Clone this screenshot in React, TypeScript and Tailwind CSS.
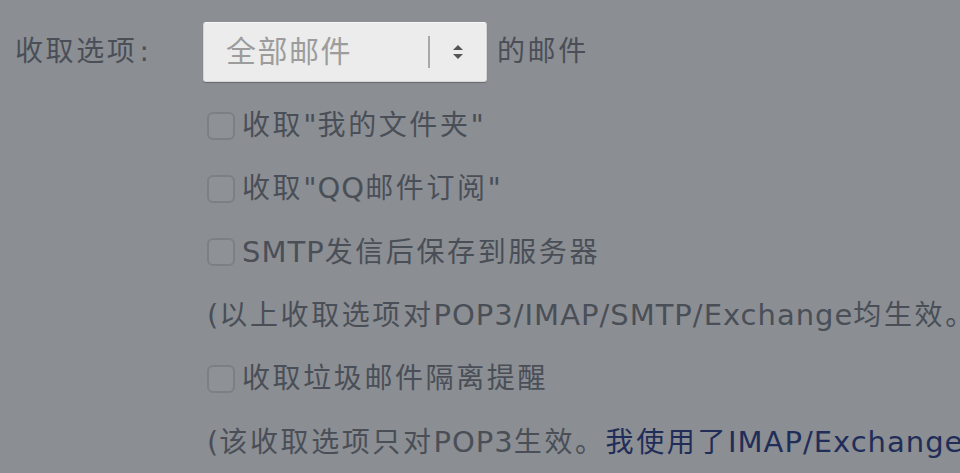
import React from 'react';

const font = { fontFamily: '"DejaVu Sans", "Noto Sans CJK SC", sans-serif' };

// CJK glyphs in the screenshot sit on a wider advance than Latin text,
// so split runs and space the CJK ones out.
function T({ text }: { text: string }) {
  const parts = text.split(/([\u3000-\u303f\u4e00-\u9fff\uff00-\uffef]+)/).filter(Boolean);
  return (
    <>
      {parts.map((p, i) =>
        /[\u3000-\u303f\u4e00-\u9fff\uff00-\uffef]/.test(p) ? (
          <span key={i} className="tracking-[2.6px]">{p}</span>
        ) : (
          <span key={i} className="text-[29px] tracking-[1px]">{p}</span>
        )
      )}
    </>
  );
}

function Box() {
  return <span className="w-[28px] h-[28px] shrink-0 rounded-[6px] border-2 border-[#7c7f85] bg-[#8e9196]" />;
}

function CheckRow({ label, h = 'h-[63px]' }: { label: string; h?: string }) {
  return (
    <div className={`${h} flex items-center gap-[7px] pl-[207px]`}>
      <Box />
      <span><T text={label} /></span>
    </div>
  );
}

export default function App() {
  return (
    <div
      className="w-[960px] h-[473px] overflow-hidden bg-[#8b8e93] text-[#4a4e57] text-[28px] leading-none whitespace-nowrap"
      style={font}
    >
      {/* 收取选项 */}
      <div className="flex pt-[22px] h-[94px] items-start">
        <div className="w-[203px] pl-[15px] h-[60px] flex items-center">
          <span className="tracking-[2.6px]">收取选项</span>
          <span className="pl-[2px]">:</span>
        </div>
        <div className="w-[284px] h-[60px] flex items-center bg-[#ececec] border border-[#d6d6d6] border-t-[#f7f7f7] rounded-[3px] shadow-[0_1px_1px_rgba(0,0,0,0.25)]">
          <span className="flex-1 pl-[22px] text-[30px] tracking-[1.5px] text-[#9c9c9c]">全部邮件</span>
          <span className="w-[2px] h-[32px] bg-[#a8a8a8]" />
          <span className="w-[56px] flex justify-center">
            <svg width="14" height="16" viewBox="0 0 14 16">
              <path d="M7 1 L12 6 H2 Z" fill="#555" />
              <path d="M7 15 L12 10 H2 Z" fill="#555" />
            </svg>
          </span>
        </div>
        <div className="h-[60px] flex items-center pl-[10px] tracking-[2.6px]">的邮件</div>
      </div>

      <CheckRow label={'收取"我的文件夹"'} />
      <CheckRow label={'收取"QQ邮件订阅"'} />
      <CheckRow label="SMTP发信后保存到服务器" h="h-[64px]" />
      <div className="h-[63px] flex items-center pl-[207px]">
        <T text="(以上收取选项对POP3/IMAP/SMTP/Exchange均生效。" />
      </div>
      <CheckRow label="收取垃圾邮件隔离提醒" h="h-[64px]" />
      <div className="h-[63px] flex items-center pl-[207px]">
        <T text="(该收取选项只对POP3生效。" />
        <span className="text-[#1f2d58]"><T text="我使用了IMAP/Exchange" /></span>
      </div>
    </div>
  );
}
